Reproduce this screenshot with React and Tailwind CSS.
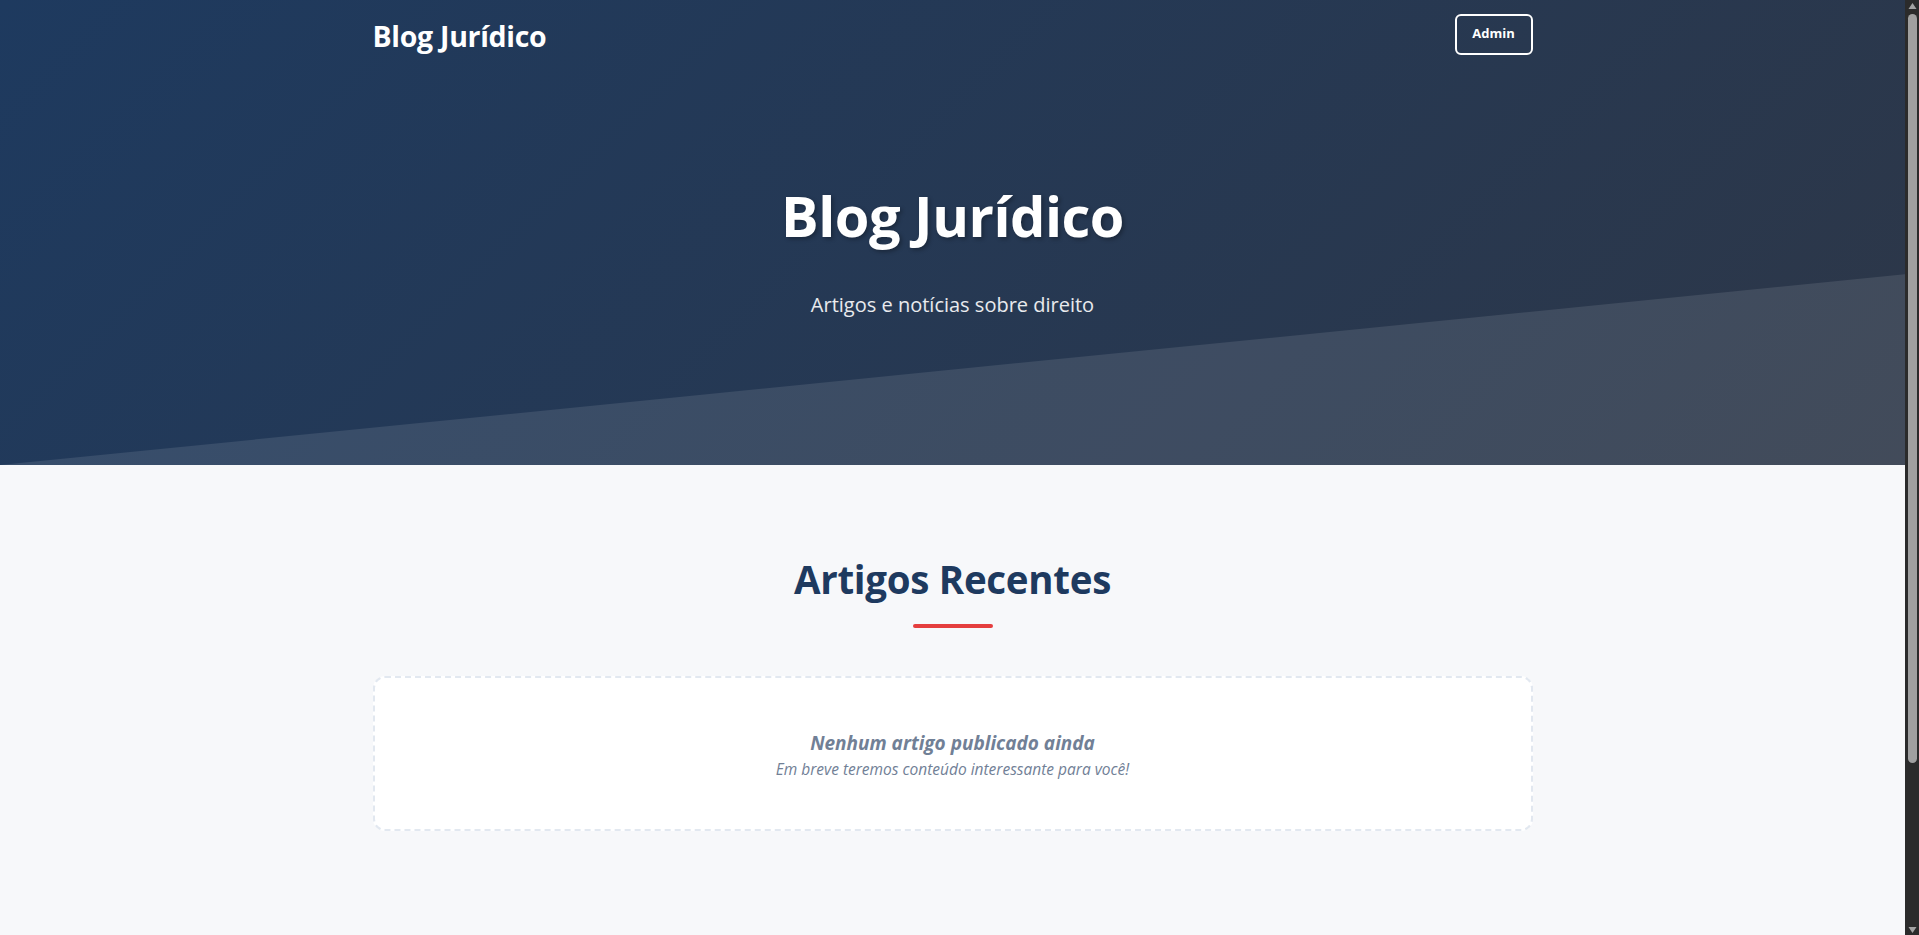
import React from 'react';

const FONT = "font-['Segoe_UI','Open_Sans','Noto_Sans',sans-serif]";

function Header() {
  return (
    <header className="relative overflow-hidden bg-[linear-gradient(135deg,#1e3a5f_0%,#2d3748_100%)] h-[465px] text-white">
      {/* light slanted band along the bottom edge */}
      <div className="absolute inset-0 bg-white/10 [clip-path:polygon(0_100%,100%_59%,100%_100%)]" />

      <nav className="relative z-10 mx-auto max-w-[1200px] px-5 h-[70px] flex items-center justify-between">
        <a href="#" className="text-[28.5px] font-bold tracking-[-0.3px] leading-none pt-[3px]">Blog Jurídico</a>
        <button className="h-[41px] w-[78px] rounded-md border-2 border-white text-[13px] font-bold -mt-[2px]">
          Admin
        </button>
      </nav>

      <div className="relative z-10 text-center pt-[112px]">
        <h1 className="text-[56px] font-bold leading-[1.2] tracking-[-0.5px] [text-shadow:2px_2px_4px_rgba(0,0,0,0.3)]">
          Blog Jurídico
        </h1>
        <p className="mt-[41px] text-[20px] text-white/90">Artigos e notícias sobre direito</p>
      </div>
    </header>
  );
}

function EmptyState() {
  return (
    <div className="bg-white rounded-xl border-2 border-dashed border-[#e2e8f0] h-[155px] flex flex-col items-center justify-center pt-[4px] text-[#718096] italic">
      <h3 className="text-[19px] font-bold leading-[1.4]">Nenhum artigo publicado ainda</h3>
      <p className="mt-[2px] text-[15.5px] leading-[1.4]">Em breve teremos conteúdo interessante para você!</p>
    </div>
  );
}

function ScrollTrack() {
  return (
    <aside className="w-[14px] shrink-0 bg-[#2b2b2b] flex flex-col items-center">
      <svg width="9" height="8" viewBox="0 0 9 8" className="mt-[2px]">
        <path d="M4.5 1 L8.5 7 L0.5 7 Z" fill="#a3a3a3" />
      </svg>
      <div className="mt-[4px] w-[9px] h-[749px] rounded-full bg-[#a0a0a0]" />
      <div className="flex-1" />
      <svg width="9" height="8" viewBox="0 0 9 8" className="mb-[1px]">
        <path d="M0.5 1 L8.5 1 L4.5 7 Z" fill="#a3a3a3" />
      </svg>
    </aside>
  );
}

export default function App() {
  return (
    <div className={`${FONT} h-screen flex overflow-hidden`}>
      <div className="flex-1 min-w-0 h-full overflow-y-auto [scrollbar-width:none] bg-[#f7f8fa]">
        <div className="min-h-[1125px]">
          <Header />
          <main className="mx-auto max-w-[1200px] px-5 pt-[90px] pb-16">
            <h2 className="text-center text-[38.5px] font-bold leading-[1.25] text-[#1e3a5f] tracking-[-0.3px]">
              Artigos Recentes
            </h2>
            <div className="mx-auto mt-[21px] h-1 w-20 rounded-sm bg-[#e53e3e]" />
            <div className="mt-12">
              <EmptyState />
            </div>
          </main>
        </div>
      </div>
      <ScrollTrack />
    </div>
  );
}
